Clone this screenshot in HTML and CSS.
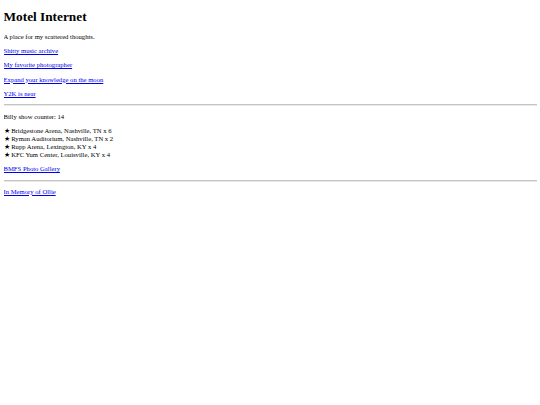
FILE: index.html
```html
<!DOCTYPE html>
<html lang="en">
<head>
    <meta charset="UTF-8">
    <title>Motel Internet</title>
    <link rel="stylesheet" href="styles.css">
</head>
<body>
<h1>Motel Internet</h1>
<p>A place for my scattered thoughts.</p>
<p><a href="#">Shitty music archive</a></p>
<p><a href="#">My favorite photographer</a></p>
<p><a href="#">Expand your knowledge on the moon</a></p>
<p><a href="#">Y2K is near</a></p>
<hr>
<p>Billy show counter: 14</p>
<p>
    ★ Bridgestone Arena, Nashville, TN x 6<br>
    ★ Ryman Auditorium, Nashville, TN x 2<br>
    ★ Rupp Arena, Lexington, KY x 4<br>
    ★ KFC Yum Center, Louisville, KY x 4
</p>
<p><a href="#">BMFS Photo Gallery</a></p>
<hr>
<p><a href="#">In Memory of Ollie</a></p>
</body>
</html>
```

FILE: styles.css
```css
body {
    margin: 3.5px;
    font-family: "Liberation Serif", "Times New Roman", serif;
    font-size: 6.65px;
    line-height: 8px;
    color: #000;
    background: #fff;
}

h1 {
    font-size: 13.3px;
    line-height: normal;
    margin: 5.5px 0 7.9px;
}

p {
    margin: 6.3px 0;
}

a {
    color: #0000ee;
}

hr {
    margin: 3.3px 0;
    border: 0;
    border-top: 1px solid #c4c4c4;
    border-bottom: 1px solid #e8e8e8;
}
```
